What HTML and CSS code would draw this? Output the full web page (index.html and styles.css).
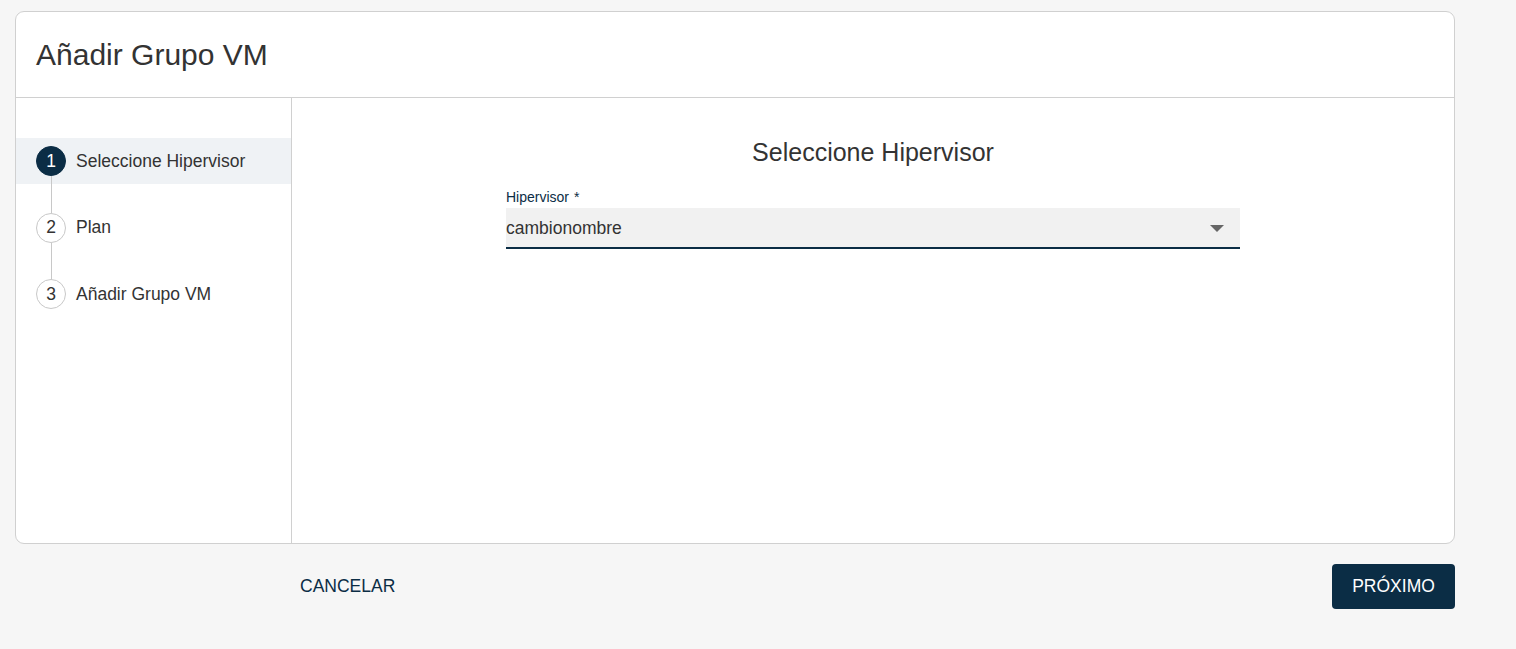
FILE: index.html
```html
<!DOCTYPE html>
<html lang="es">
  <head>
    <meta charset="UTF-8" />
    <meta name="viewport" content="width=device-width, initial-scale=1.0" />
    <title>Añadir Grupo VM</title>
    <link rel="stylesheet" href="styles.css">
  </head>
  <body>
    <div class="dialog">
      <div class="dialog-header">
        <h1>Añadir Grupo VM</h1>
      </div>
      <div class="dialog-body">
        <ul class="steps">
          <li class="step active">
            <span class="step-num">1</span>
            <span class="step-label">Seleccione Hipervisor</span>
          </li>
          <li class="step">
            <span class="step-num">2</span>
            <span class="step-label">Plan</span>
          </li>
          <li class="step last">
            <span class="step-num">3</span>
            <span class="step-label">Añadir Grupo VM</span>
          </li>
        </ul>
        <div class="step-content">
          <h2>Seleccione Hipervisor</h2>
          <div class="field">
            <label>Hipervisor<span class="req">*</span></label>
            <div class="select">
              <span>cambionombre</span>
              <span class="caret"></span>
            </div>
          </div>
        </div>
      </div>
    </div>
    <div class="actions">
      <button class="btn-cancel">CANCELAR</button>
      <button class="btn-next">PRÓXIMO</button>
    </div>
  </body>
</html>
```

FILE: styles.css
```css
* {
  box-sizing: border-box;
}

body {
  margin: 0;
  padding: 11px 0 0 15px;
  background-color: #f6f6f6;
  font-family: 'Liberation Sans', Arial, sans-serif;
  color: #333;
}

.dialog {
  width: 1440px;
  background-color: #fff;
  border: 1px solid #d0d0d0;
  border-radius: 9px;
}

.dialog-header {
  height: 86px;
  border-bottom: 1px solid #d0d0d0;
  display: flex;
  align-items: center;
  padding-left: 20px;
}

.dialog-header h1 {
  margin: 0;
  font-size: 30px;
  font-weight: normal;
  color: #333;
  padding-top: 1px;
}

.dialog-body {
  display: flex;
  height: 445px;
}

.steps {
  list-style: none;
  margin: 0;
  padding: 40px 0 0;
  width: 276px;
  border-right: 1px solid #d0d0d0;
  display: flex;
  flex-direction: column;
  gap: 20.5px;
}

.step {
  position: relative;
  display: flex;
  align-items: center;
  height: 46px;
  padding-left: 20px;
}

.step.active {
  background-color: #eff2f5;
}

.step-num {
  position: relative;
  width: 30px;
  height: 30px;
  border-radius: 50%;
  border: 1px solid #c8c8c8;
  background-color: #fff;
  display: flex;
  align-items: center;
  justify-content: center;
  font-size: 17.5px;
  color: #333;
  margin-right: 10px;
}

.step.active .step-num {
  background-color: #0b2d45;
  border-color: #0b2d45;
  color: #fff;
}

/* connector between the circles */
.step-num::after {
  content: '';
  position: absolute;
  left: 14px;
  top: 29px;
  width: 1px;
  height: 37px;
  background-color: #c8c8c8;
}

.step.last .step-num::after {
  display: none;
}

.step-label {
  font-size: 17.5px;
  color: #333;
}

.step-content {
  flex: 1;
  display: flex;
  flex-direction: column;
  align-items: center;
  padding-top: 40px;
}

.step-content h2 {
  margin: 0 0 22px;
  font-size: 25px;
  font-weight: normal;
  color: #333;
}

.field {
  width: 734px;
}

.field label {
  display: block;
  font-size: 14px;
  color: #0b2d45;
  margin-bottom: 3px;
}

.req {
  margin-left: 5px;
}

.select {
  display: flex;
  align-items: center;
  justify-content: space-between;
  height: 41px;
  padding-top: 1px;
  background-color: #f1f1f1;
  border-bottom: 2px solid #0b2d45;
  font-size: 17.5px;
  color: #333;
}

.caret {
  width: 0;
  height: 0;
  border-left: 7px solid transparent;
  border-right: 7px solid transparent;
  border-top: 7px solid #666;
  margin-right: 16px;
}

.actions {
  width: 1440px;
  display: flex;
  justify-content: space-between;
  align-items: center;
  margin-top: 20px;
  padding-left: 269px;
}

.actions button {
  font-family: 'Liberation Sans', Arial, sans-serif;
  font-size: 17.5px;
  border: none;
  cursor: pointer;
}

.btn-cancel {
  background: none;
  color: #0b2d45;
  padding: 12px 16px;
}

.btn-next {
  background-color: #0b2d45;
  color: #fff;
  height: 45px;
  width: 123px;
  padding: 0;
  border-radius: 4px;
}
```
